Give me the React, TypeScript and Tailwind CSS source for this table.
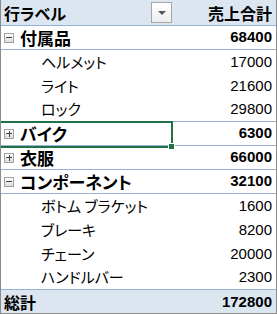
const rows = [
  { label: '付属品', value: '68400', kind: 'group', open: true },
  { label: 'ヘルメット', value: '17000', kind: 'item' },
  { label: 'ライト', value: '21600', kind: 'item' },
  { label: 'ロック', value: '29800', kind: 'item' },
  { label: 'バイク', value: '6300', kind: 'group', open: false },
  { label: '衣服', value: '66000', kind: 'group', open: false },
  { label: 'コンポーネント', value: '32100', kind: 'group', open: true },
  { label: 'ボトム ブラケット', value: '1600', kind: 'item' },
  { label: 'ブレーキ', value: '8200', kind: 'item' },
  { label: 'チェーン', value: '20000', kind: 'item' },
  { label: 'ハンドルバー', value: '2300', kind: 'item' },
]

const jp = "font-['Noto_Sans_CJK_JP',sans-serif] [font-feature-settings:'palt']"
const num = "font-['Liberation_Sans',sans-serif] text-[15px]"

function Toggle({ open }: { open: boolean }) {
  return (
    <span className="relative flex h-[10px] w-[10px] items-center justify-center border border-[#a0a0a0] bg-gradient-to-b from-white to-[#dcdcdc]">
      <span className="absolute h-px w-[6px] bg-[#404040]" />
      {!open && <span className="absolute h-[6px] w-px bg-[#404040]" />}
    </span>
  )
}

export default function App() {
  return (
    <div className="relative h-[314px] w-[277px] overflow-hidden border-x border-b border-[#8c8c8c] bg-white text-black">
      <div className="flex h-[26px] items-center border-b border-[#95b3d7] bg-[#dce6f1]">
        <div className="flex w-[171px] items-center">
          <span className={`${jp} pl-[3px] text-[16px] font-bold`}>行ラベル</span>
          <span className="ml-auto flex h-[21px] w-[21px] items-center justify-center border border-[#a6a6a6] bg-gradient-to-b from-white to-[#eeeeee]">
            <span className="h-0 w-0 border-x-[4px] border-t-[4px] border-x-transparent border-t-[#555]" />
          </span>
        </div>
        <span className={`${jp} ml-auto pr-[4px] text-[16px] font-bold`}>売上合計</span>
      </div>

      {rows.map((r, i) => {
        const next = rows[i + 1]
        const line = r.kind === 'group' || !next || next.kind === 'group'
        return (
          <div
            key={r.label}
            className={`flex h-[24px] items-center ${line ? 'border-b border-[#95b3d7]' : ''}`}
          >
            {r.kind === 'group' ? (
              <>
                <span className="ml-[3px] mr-[6px]">
                  <Toggle open={!!r.open} />
                </span>
                <span className={`${jp} text-[17px] font-bold`}>{r.label}</span>
                <span className={`${num} ml-auto pr-[4px] font-bold`}>{r.value}</span>
              </>
            ) : (
              <>
                <span className={`${jp} pl-[40px] text-[15px]`}>{r.label}</span>
                <span className={`${num} ml-auto pr-[4px]`}>{r.value}</span>
              </>
            )}
          </div>
        )
      })}

      <div className="flex h-[24px] items-center bg-[#dce6f1]">
        <span className={`${jp} pl-[3px] text-[16px] font-bold`}>総計</span>
        <span className={`${num} ml-auto pr-[4px] font-bold`}>172800</span>
      </div>

      <div className="pointer-events-none absolute left-[-3px] top-[121px] h-[27px] w-[175px] border-2 border-[#217346]" />
      <div className="pointer-events-none absolute left-[167px] top-[143px] h-[7px] w-[7px] border border-white bg-[#217346]" />
    </div>
  )
}
